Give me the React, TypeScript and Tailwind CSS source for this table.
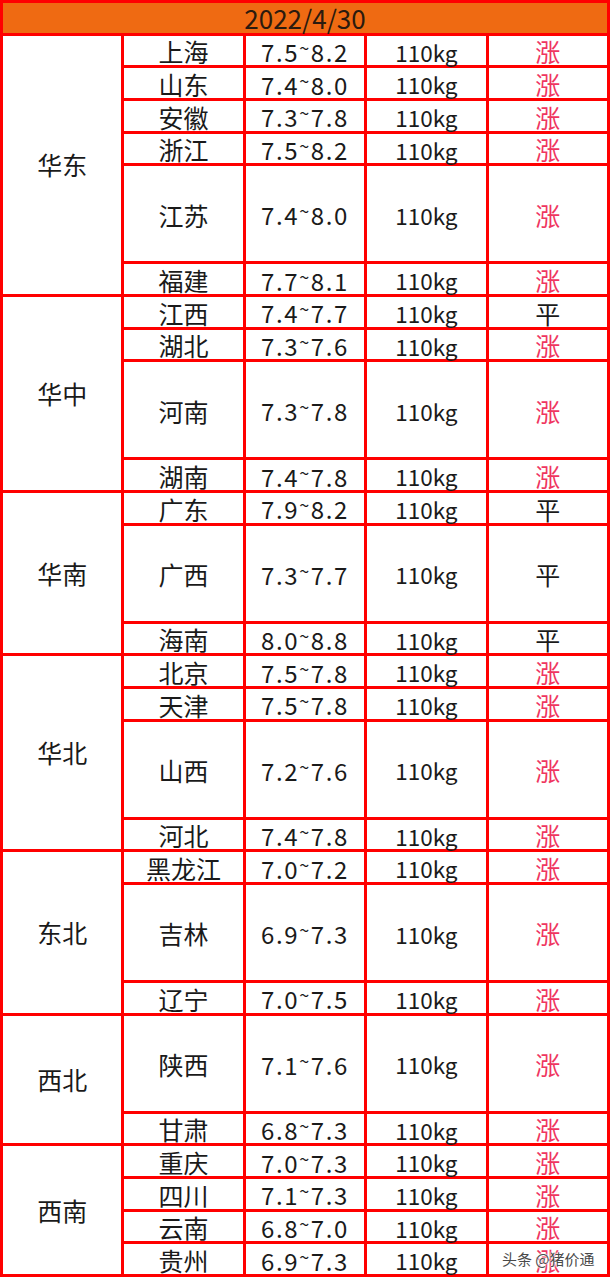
import React from "react";

type Row = [string, string, string, boolean?];

interface Group {
  region: string;
  rows: Row[];
}

const groups: Group[] = [
  {
    region: "华东",
    rows: [
      ["上海", "7.5~8.2", "涨"],
      ["山东", "7.4~8.0", "涨"],
      ["安徽", "7.3~7.8", "涨"],
      ["浙江", "7.5~8.2", "涨"],
      ["江苏", "7.4~8.0", "涨", true],
      ["福建", "7.7~8.1", "涨"],
    ],
  },
  {
    region: "华中",
    rows: [
      ["江西", "7.4~7.7", "平"],
      ["湖北", "7.3~7.6", "涨"],
      ["河南", "7.3~7.8", "涨", true],
      ["湖南", "7.4~7.8", "涨"],
    ],
  },
  {
    region: "华南",
    rows: [
      ["广东", "7.9~8.2", "平"],
      ["广西", "7.3~7.7", "平", true],
      ["海南", "8.0~8.8", "平"],
    ],
  },
  {
    region: "华北",
    rows: [
      ["北京", "7.5~7.8", "涨"],
      ["天津", "7.5~7.8", "涨"],
      ["山西", "7.2~7.6", "涨", true],
      ["河北", "7.4~7.8", "涨"],
    ],
  },
  {
    region: "东北",
    rows: [
      ["黑龙江", "7.0~7.2", "涨"],
      ["吉林", "6.9~7.3", "涨", true],
      ["辽宁", "7.0~7.5", "涨"],
    ],
  },
  {
    region: "西北",
    rows: [
      ["陕西", "7.1~7.6", "涨", true],
      ["甘肃", "6.8~7.3", "涨"],
    ],
  },
  {
    region: "西南",
    rows: [
      ["重庆", "7.0~7.3", "涨"],
      ["四川", "7.1~7.3", "涨"],
      ["云南", "6.8~7.0", "涨"],
      ["贵州", "6.9~7.3", "涨"],
    ],
  },
];

const regionSpan: Record<number, string> = {
  4: "row-span-4",
  5: "row-span-5",
  6: "row-span-6",
  8: "row-span-8",
};

const font = { fontFamily: '"Noto Sans CJK SC", "Noto Sans", sans-serif' };

function Price({ value }: { value: string }) {
  const [a, b] = value.split("~");
  return (
    <span className="tracking-[1.6px]">
      {a}
      <span className="relative -top-[7px] text-[18px]">~</span>
      {b}
    </span>
  );
}

export default function App() {
  return (
    <div className="relative w-[613px] h-[1280px] bg-white" style={font}>
      <div className="grid w-[610px] h-[1277px] grid-cols-5 grid-rows-[repeat(39,minmax(0,1fr))] gap-[3px] bg-[#ff0000] p-[3px] leading-none">
        <div className="col-span-5 flex items-center justify-center bg-[#ef6a12] text-[26px] text-[#2b1a0e]">
          2022/4/30
        </div>
        {groups.map((g) => {
          const span = g.rows.reduce((n, r) => n + (r[3] ? 3 : 1), 0);
          return (
            <React.Fragment key={g.region}>
              <div
                className={`${regionSpan[span]} flex items-center justify-center bg-white text-[25px] text-[#1a1a1a]`}
              >
                {g.region}
              </div>
              {g.rows.map(([name, price, trend, tall]) => {
                const cell = `${tall ? "row-span-3" : ""} flex items-center justify-center bg-white text-[#1a1a1a]`;
                return (
                  <React.Fragment key={name}>
                    <div className={`${cell} text-[25px] pt-[3px]`}>{name}</div>
                    <div className={`${cell} text-[24px] pt-[3px]`}>
                      <Price value={price} />
                    </div>
                    <div className={`${cell} text-[22.5px] pt-[3px]`}>110kg</div>
                    <div
                      className={`${cell} text-[25px] pt-[3px] ${trend === "涨" ? "!text-[#ef3560]" : ""}`}
                    >
                      {trend}
                    </div>
                  </React.Fragment>
                );
              })}
            </React.Fragment>
          );
        })}
      </div>
      <div className="absolute left-[502px] top-[1251px] text-[15px] leading-none text-[#4a4a4a] [text-shadow:0_0_2px_#fff,0_0_2px_#fff,0_0_2px_#fff]">
        头条 @猪价通
      </div>
    </div>
  );
}
